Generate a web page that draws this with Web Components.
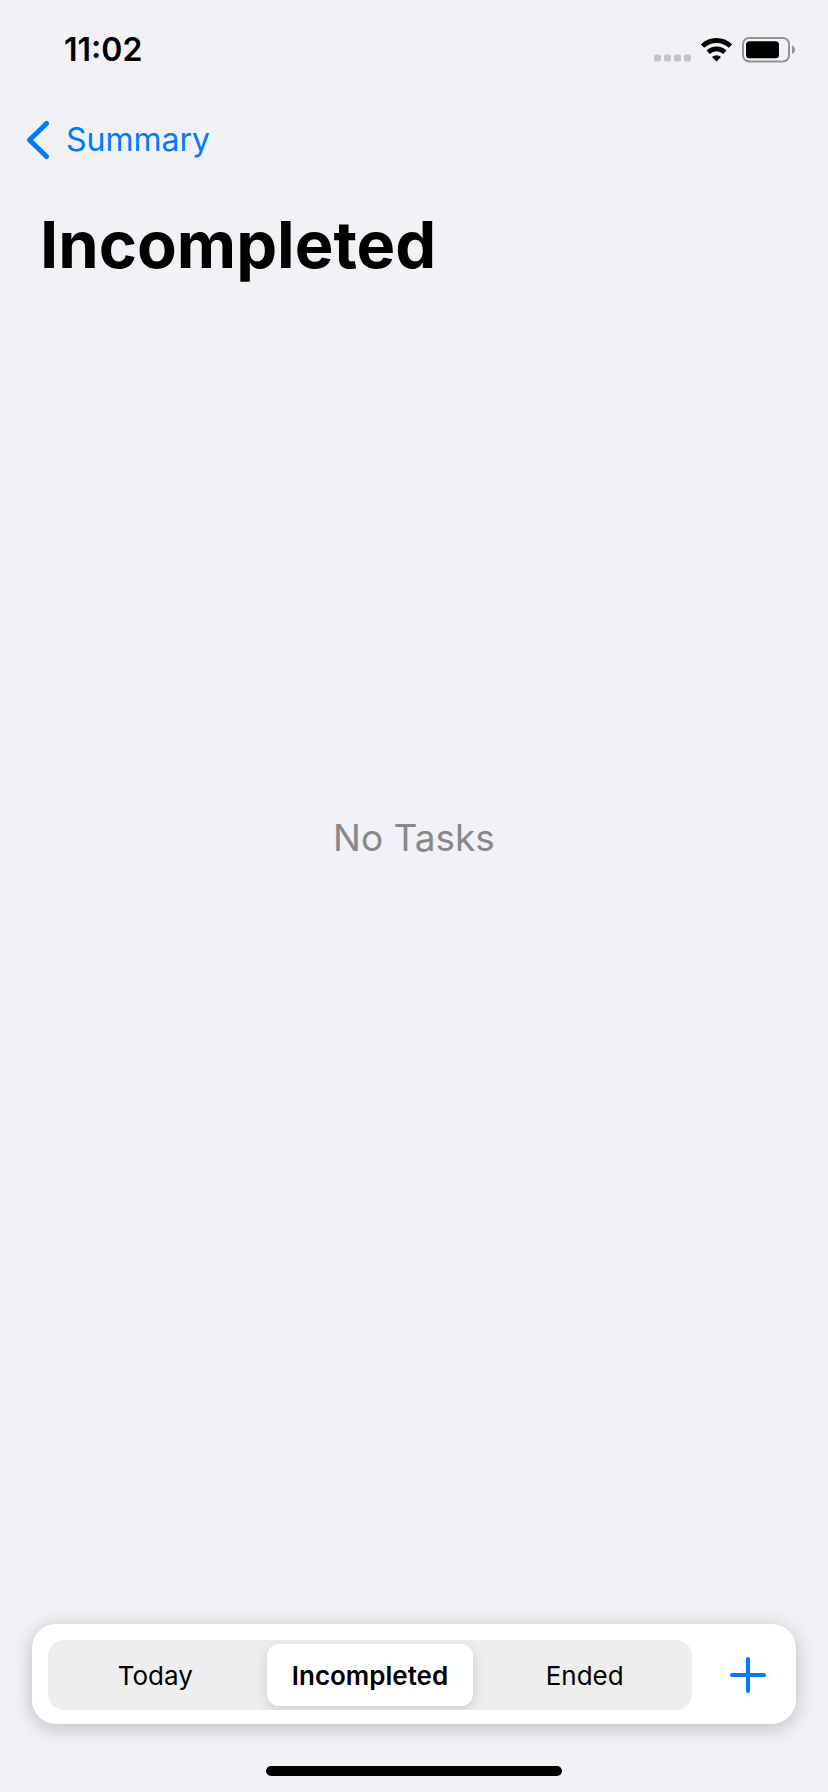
<!DOCTYPE html>
<html lang="en">
<head>
<meta charset="UTF-8">
<meta name="viewport" content="width=device-width, initial-scale=1">
<title>Incompleted</title>
<style>
    body {
        margin: 0;
        background: #f1f1f6;
        color: #000;
        font-family: Inter, "Liberation Sans", sans-serif;
    }
</style>
</head>
<body>
<task-screen>
    <status-bar slot="status" time="11:02"></status-bar>
    <nav-header slot="header" back="Summary" heading="Incompleted"></nav-header>
    <empty-state>No Tasks</empty-state>
    <filter-bar slot="footer" options="Today,Incompleted,Ended" selected="Incompleted"></filter-bar>
</task-screen>

<script>
/* Page frame: status, header, content, footer and the home indicator */
class TaskScreen extends HTMLElement {
    constructor() {
        super();
        this.attachShadow({ mode: 'open' }).innerHTML = `
            <style>
                :host {
                    display: flex;
                    flex-direction: column;
                    min-height: 100vh;
                }
                main {
                    flex: 1;
                    display: grid;
                    place-items: center;
                    padding-bottom: 210px;
                }
                footer {
                    display: flex;
                    flex-direction: column;
                    gap: 42px;
                    padding: 24px 32px 16px;
                }
                .home {
                    width: 296px;
                    height: 10px;
                    border-radius: 5px;
                    background: #000;
                    align-self: center;
                }
            </style>
            <slot name="status"></slot>
            <slot name="header"></slot>
            <main><slot></slot></main>
            <footer>
                <slot name="footer"></slot>
                <div class="home"></div>
            </footer>
        `;
    }
}

class StatusBar extends HTMLElement {
    constructor() {
        super();
        this.attachShadow({ mode: 'open' });
    }

    connectedCallback() {
        this.shadowRoot.innerHTML = `
            <style>
                :host {
                    display: flex;
                    justify-content: space-between;
                    align-items: center;
                    height: 99px;
                    padding: 0 32px 0 64px;
                }
                time {
                    font-size: 32px;
                    font-weight: 600;
                }
                .icons {
                    display: flex;
                    align-items: center;
                    gap: 10px;
                }
                svg { display: block; }
            </style>
            <time>${this.getAttribute('time') || ''}</time>
            <div class="icons">
                <svg width="37" height="26" viewBox="0 0 37 26" fill="#c3c3c8" aria-hidden="true">
                    <rect x="0" y="17.5" width="7" height="7" rx="2"/>
                    <rect x="10" y="17.5" width="7" height="7" rx="2"/>
                    <rect x="20" y="17.5" width="7" height="7" rx="2"/>
                    <rect x="30" y="17.5" width="7" height="7" rx="2"/>
                </svg>
                <svg width="31" height="26" viewBox="0 0 31 26" aria-hidden="true">
                    <g fill="none" stroke="#000" stroke-width="4.8">
                        <path d="M1.6 9.1a20 20 0 0 1 27.8 0"/>
                        <path d="M7.2 15.3a12 12 0 0 1 16.6 0"/>
                    </g>
                    <path d="M11 19.9a6.6 6.6 0 0 1 9 0L15.500 24.600z"/>
                </svg>
                <svg width="54" height="26" viewBox="0 0 54 26" aria-hidden="true">
                    <rect x="1" y="1" width="46" height="23.500" rx="6" fill="none" stroke="#929297" stroke-width="2"/>
                    <rect x="4" y="4.300" width="33" height="17" rx="3.500"/>
                    <path d="M50 8.500c2 .7 3 2.300 3 4.300s-1 3.600-3 4.300z" fill="#929297"/>
                </svg>
            </div>
        `;
    }
}

class NavHeader extends HTMLElement {
    constructor() {
        super();
        this.attachShadow({ mode: 'open' });
    }

    connectedCallback() {
        this.shadowRoot.innerHTML = `
            <style>
                :host {
                    display: block;
                    padding: 0 24px;
                }
                nav {
                    display: flex;
                    align-items: center;
                    height: 82px;
                }
                a {
                    display: flex;
                    align-items: center;
                    gap: 16px;
                    color: #007aff;
                    font-size: 32px;
                    line-height: 40px;
                    text-decoration: none;
                }
                h1 {
                    margin: 24px 16px 0;
                    font-size: 65px;
                    line-height: 80px;
                    font-weight: 700;
                }
            </style>
            <nav>
                <a href="#summary">
                    <svg width="26" height="40" viewBox="0 0 26 40" fill="none" stroke="#007aff"
                         stroke-width="5" stroke-linecap="round" stroke-linejoin="round" aria-hidden="true">
                        <path d="M22.500 3.500L5.500 20l17 16.500"/>
                    </svg>
                    <span>${this.getAttribute('back') || ''}</span>
                </a>
            </nav>
            <h1>${this.getAttribute('heading') || ''}</h1>
        `;
    }
}

class EmptyState extends HTMLElement {
    constructor() {
        super();
        this.attachShadow({ mode: 'open' }).innerHTML = `
            <style>
                :host {
                    display: block;
                    color: #88888c;
                    font-size: 37px;
                    line-height: 48px;
                }
            </style>
            <slot></slot>
        `;
    }
}

/* Floating card with the segmented filter and the add button */
class FilterBar extends HTMLElement {
    constructor() {
        super();
        this.attachShadow({ mode: 'open' });
    }

    connectedCallback() {
        const options  = (this.getAttribute('options') || '').split(',');
        const selected = this.getAttribute('selected');

        this.shadowRoot.innerHTML = `
            <style>
                :host {
                    display: flex;
                    gap: 16px;
                    padding: 16px 8px 14px 16px;
                    border-radius: 24px;
                    background: #fff;
                    box-shadow: 0 4px 20px rgba(0, 0, 0, 0.22);
                }
                fieldset {
                    flex: 1;
                    display: grid;
                    grid-template-columns: repeat(3, 1fr);
                    min-width: 0;
                    height: 70px;
                    margin: 0;
                    padding: 0;
                    border: 0;
                    border-radius: 16px;
                    background: #eee;
                    overflow: hidden;
                }
                label {
                    display: grid;
                    place-items: center;
                    margin: 4px;
                    border-radius: 12px;
                    font-size: 26px;
                    font-weight: 400;
                }
                label:has(:checked) {
                    background: #fff;
                    box-shadow: 0 4px 14px rgba(0, 0, 0, 0.14);
                    font-weight: 600;
                }
                input {
                    appearance: none;
                    margin: 0;
                }
                input, span { grid-area: 1 / 1; }
                button {
                    display: grid;
                    place-items: center;
                    width: 80px;
                    padding: 0;
                    border: 0;
                    background: none;
                    color: #007aff;
                }
            </style>
            <fieldset aria-label="Filter">
                ${options.map(name => `
                    <label>
                        <input type="radio" name="filter" value="${name}" ${name === selected ? 'checked' : ''}>
                        <span>${name}</span>
                    </label>
                `).join('')}
            </fieldset>
            <button type="button" aria-label="Add task">
                <svg width="36" height="36" viewBox="0 0 36 36" fill="none" stroke="currentColor"
                     stroke-width="4" stroke-linecap="round">
                    <path d="M18 2v32M2 18h32"/>
                </svg>
            </button>
        `;
    }
}

customElements.define('task-screen', TaskScreen);
customElements.define('status-bar', StatusBar);
customElements.define('nav-header', NavHeader);
customElements.define('empty-state', EmptyState);
customElements.define('filter-bar', FilterBar);
</script>
</body>
</html>
